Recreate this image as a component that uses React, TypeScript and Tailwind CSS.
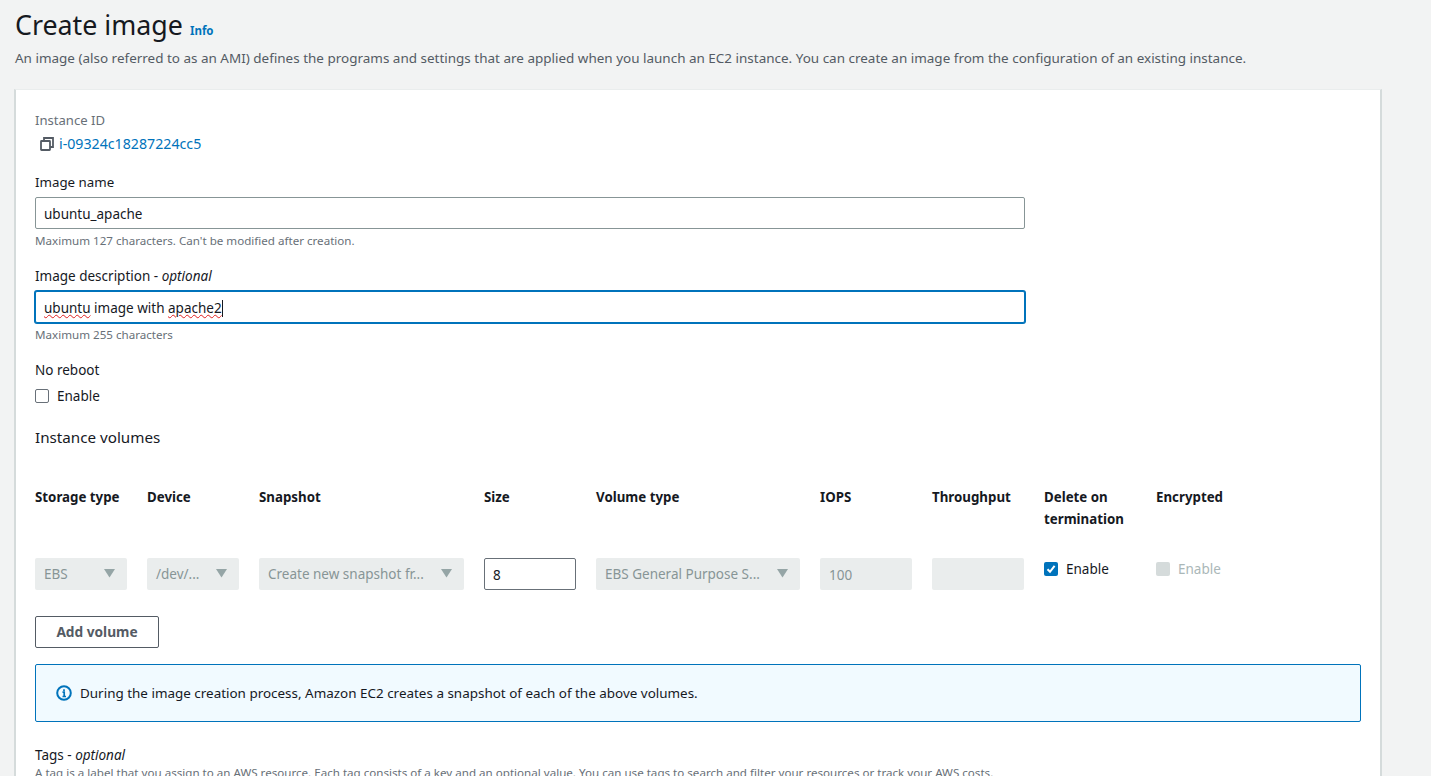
import React from 'react';

const font = "font-['Noto_Sans',sans-serif]";

function Caret() {
  return (
    <svg width="11" height="12" viewBox="0 0 11 12" className="shrink-0 mb-[2px]">
      <path d="M0 2h11L5.5 10.5z" fill="#95a5a6" />
    </svg>
  );
}

function DisabledSelect({ label, width }: { label: string; width: string }) {
  return (
    <div className={`h-8 ${width} bg-[#eaeded] rounded-[2px] flex items-center justify-between pl-[9px] pr-[12px] text-[13.5px] text-[#879596] whitespace-nowrap`}>
      <span className="pt-px">{label}</span>
      <Caret />
    </div>
  );
}

function FieldLabel({ children }: { children: React.ReactNode }) {
  return <div className="text-[13.3px] leading-[20px] text-[#16191f]">{children}</div>;
}

const headers = [
  { text: 'Storage type', width: 'w-[92px]' },
  { text: 'Device', width: 'w-[92px]' },
  { text: 'Snapshot', width: 'w-[205px]' },
  { text: 'Size', width: 'w-[92px]' },
  { text: 'Volume type', width: 'w-[204px]' },
  { text: 'IOPS', width: 'w-[92px]' },
  { text: 'Throughput', width: 'w-[92px]' },
  { text: 'Delete on termination', width: 'w-[92px]' },
  { text: 'Encrypted', width: 'w-[92px]' },
];

export default function App() {
  return (
    <div className={`${font} h-[776px] w-[1431px] overflow-hidden bg-[#f2f3f3] pl-[14px] text-[#16191f]`}>
      {/* Header */}
      <div className="h-[89px] pl-[1px] pt-[7px]">
        <div className="flex items-baseline gap-[7px]">
          <h1 className="text-[26.8px] leading-[36px] font-normal">Create image</h1>
          <a className="text-[11.5px] font-bold text-[#0073bb]">Info</a>
        </div>
        <p className="mt-[5px] text-[13.48px] leading-[20px] text-[#545b64]">
          An image (also referred to as an AMI) defines the programs and settings that are applied when you launch an EC2 instance. You can create an image from the configuration of an existing instance.
        </p>
      </div>

      {/* Card */}
      <div className="w-[1368px] h-[720px] bg-white border-t border-t-[#eaeded] border-l-2 border-l-[#d5dbdb] border-r-2 border-r-[#d5dbdb] pl-[19px] pr-[19px] pt-[20px]">
        <div className="text-[13.1px] leading-[20px] text-[#687078]">Instance ID</div>
        <div className="mt-[4px] flex items-center pl-[5px] gap-[5px] text-[14.2px] leading-[20px] text-[#0073bb]">
          <svg width="14" height="14" viewBox="0 0 14 14" fill="none" stroke="#545b64" strokeWidth="1.8">
            <rect x="1" y="4" width="9" height="9" rx="0.5" />
            <path d="M4 4V1h9v9h-3" />
          </svg>
          <span>i-09324c18287224cc5</span>
        </div>

        <div className="mt-[18px]">
          <FieldLabel>Image name</FieldLabel>
          <input
            readOnly
            value="ubuntu_apache"
            className="mt-[5px] block h-8 w-[990px] rounded-[2px] border border-[#879596] bg-white px-[8px] pt-[2px] text-[13.5px] text-[#16191f] outline-none"
          />
          <div className="mt-[4px] text-[11.6px] leading-[16px] text-[#687078]">Maximum 127 characters. Can't be modified after creation.</div>
        </div>

        <div className="mt-[17px]">
          <div className="text-[13.5px] leading-[20px]">
            Image description - <i>optional</i>
          </div>
          <div className="mt-[5px] flex h-8 w-[990px] items-center rounded-[2px] border border-[#0073bb] shadow-[0_0_0_1px_#0073bb] bg-white pl-[8px] pt-[2px] text-[13.5px]">
            <span className="underline decoration-wavy decoration-[#e02020] decoration-1">ubuntu</span>
            <span className="whitespace-pre"> image with </span>
            <span className="underline decoration-wavy decoration-[#e02020] decoration-1">apache2</span>
            <span className="h-[17px] w-px bg-[#16191f]" />
          </div>
          <div className="mt-[4px] text-[11.6px] leading-[16px] text-[#687078]">Maximum 255 characters</div>
        </div>

        <div className="mt-[17px]">
          <div className="text-[13.5px] leading-[20px]">No reboot</div>
          <label className="mt-[6px] flex items-center gap-[8px] text-[13.5px] leading-[20px]">
            <span className="h-[14px] w-[14px] rounded-[2px] border border-[#687078] bg-white" />
            Enable
          </label>
        </div>

        <h2 className="mt-[20px] text-[15.2px] leading-[22px] font-normal">Instance volumes</h2>

        {/* Volumes table */}
        <div className="mt-[38px] flex gap-[20px] text-[13.3px] leading-[22px] font-bold">
          {headers.map((h) => (
            <div key={h.text} className={`${h.width} h-[44px]`}>
              {h.text}
            </div>
          ))}
        </div>
        <div className="mt-[17px] flex gap-[20px] items-start pt-[11px]">
          <DisabledSelect label="EBS" width="w-[92px]" />
          <DisabledSelect label="/dev/..." width="w-[92px]" />
          <DisabledSelect label="Create new snapshot fr..." width="w-[205px]" />
          <input
            readOnly
            value="8"
            className="block h-8 w-[92px] rounded-[2px] border border-[#687078] bg-white px-[8px] pt-[2px] text-[13.5px] outline-none"
          />
          <DisabledSelect label="EBS General Purpose S..." width="w-[204px]" />
          <div className="flex h-8 w-[92px] items-center rounded-[2px] bg-[#eaeded] pl-[9px] pt-[2px] text-[13.5px] text-[#879596]">100</div>
          <div className="h-8 w-[92px] rounded-[2px] bg-[#eaeded]" />
          <label className="flex h-[22px] w-[92px] items-center gap-[8px] text-[13.5px]">
            <span className="flex h-[14px] w-[14px] items-center justify-center rounded-[2px] bg-[#0073bb]">
              <svg width="10" height="10" viewBox="0 0 10 10" fill="none" stroke="white" strokeWidth="2">
                <path d="M1.5 5.2 4 7.8 8.6 1.8" />
              </svg>
            </span>
            Enable
          </label>
          <label className="flex h-[22px] w-[92px] items-center gap-[8px] text-[13.5px] text-[#aab7b8]">
            <span className="h-[14px] w-[14px] rounded-[2px] bg-[#d5dbdb]" />
            Enable
          </label>
        </div>

        <button className="mt-[26px] block h-8 w-[124px] rounded-[2px] border border-[#545b64] bg-white text-center text-[13.7px] font-bold text-[#545b64]">
          Add volume
        </button>

        <div className="mt-[16px] flex h-[58px] w-[1326px] items-center gap-[8px] rounded-[2px] border border-[#0073bb] bg-[#f1faff] pl-[20px] text-[13.45px]">
          <svg width="16" height="16" viewBox="0 0 16 16" fill="none" className="shrink-0">
            <circle cx="8" cy="8" r="6.8" stroke="#0073bb" strokeWidth="2" />
            <path d="M6.5 7.2H8.2V11.5M6.5 11.5H10M8 4.2v1.8" stroke="#0073bb" strokeWidth="1.7" />
          </svg>
          During the image creation process, Amazon EC2 creates a snapshot of each of the above volumes.
        </div>

        <div className="mt-[23px] text-[13.5px] leading-[20px]">
          Tags - <i>optional</i>
        </div>
        <div className="text-[11.6px] leading-[15px] text-[#687078] whitespace-nowrap">
          A tag is a label that you assign to an AWS resource. Each tag consists of a key and an optional value. You can use tags to search and filter your resources or track your AWS costs.
        </div>
      </div>
    </div>
  );
}
